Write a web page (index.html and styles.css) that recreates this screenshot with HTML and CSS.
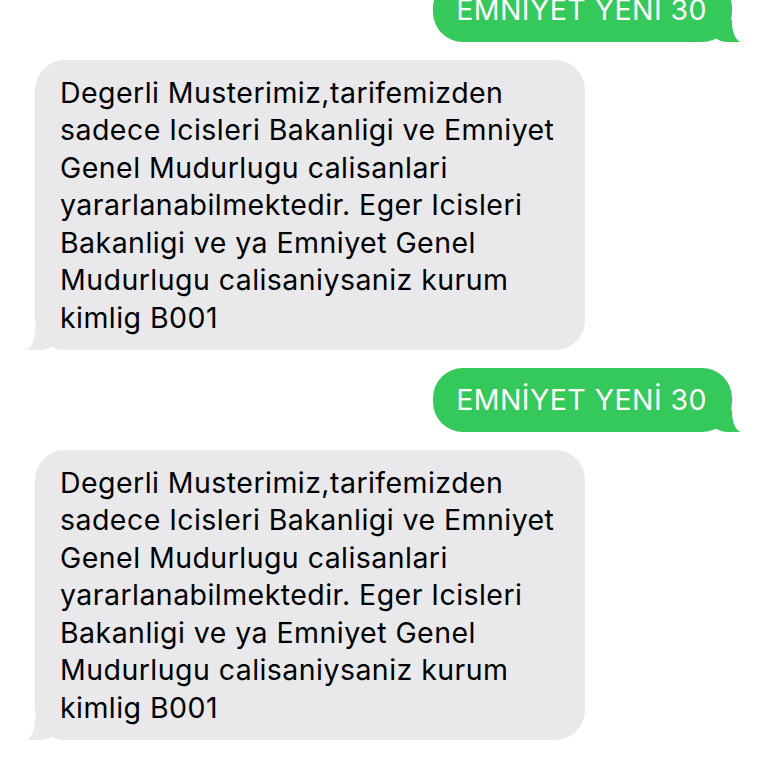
FILE: index.html
```html
<!DOCTYPE html>
<html lang="tr">
<head>
    <meta charset="UTF-8">
    <meta name="viewport" content="width=device-width, initial-scale=1.0">
    <title>Mesajlar</title>
    <link rel="stylesheet" href="styles.css">
</head>
<body>
    <div class="thread">
        <div class="msg sent first">EMNİYET YENİ 30</div>
        <div class="msg received">
            Degerli Musterimiz,tarifemizden<br>
            sadece Icisleri Bakanligi ve Emniyet<br>
            Genel Mudurlugu calisanlari<br>
            yararlanabilmektedir. Eger Icisleri<br>
            Bakanligi ve ya Emniyet Genel<br>
            Mudurlugu calisaniysaniz kurum<br>
            kimlig B001
        </div>
        <div class="msg sent">EMNİYET YENİ 30</div>
        <div class="msg received">
            Degerli Musterimiz,tarifemizden<br>
            sadece Icisleri Bakanligi ve Emniyet<br>
            Genel Mudurlugu calisanlari<br>
            yararlanabilmektedir. Eger Icisleri<br>
            Bakanligi ve ya Emniyet Genel<br>
            Mudurlugu calisaniysaniz kurum<br>
            kimlig B001
        </div>
    </div>
</body>
</html>
```

FILE: styles.css
```css
/* Page */
body {
    margin: 0;
    background: #ffffff;
    font-family: Inter, "Noto Sans", sans-serif;
    overflow: hidden;
}

/* Message list */
.thread {
    display: flex;
    flex-direction: column;
    gap: 17.5px;
    padding: 0 36px 0 35px;
}

.msg {
    position: relative;
    font-size: 28.5px;
    letter-spacing: 0.45px;
    line-height: 37.5px;
    border-radius: 30px;
    white-space: nowrap;
}

.msg.first {
    margin-top: -22.5px;
}

.msg::before,
.msg::after {
    content: "";
    position: absolute;
    bottom: 0;
    height: 22px;
}

/* Outgoing (green) */
.msg.sent {
    align-self: flex-end;
    padding: 13.5px 25px 13.5px 23px;
    background: #35c85a;
    color: #ffffff;
}

.msg.sent::before {
    right: -10px;
    width: 30px;
    background: #35c85a;
    border-bottom-left-radius: 16px 10px;
}

.msg.sent::after {
    right: -30px;
    width: 30px;
    background: #ffffff;
    border-bottom-left-radius: 10px 20px;
}

/* Incoming (grey) */
.msg.received {
    align-self: flex-start;
    width: 500px;
    padding: 14px 25px;
    background: #e9e9eb;
    color: #000000;
}

.msg.received::before {
    left: -10px;
    width: 30px;
    background: #e9e9eb;
    border-bottom-right-radius: 16px 10px;
}

.msg.received::after {
    left: -30px;
    width: 30px;
    background: #ffffff;
    border-bottom-right-radius: 10px 20px;
}
```
